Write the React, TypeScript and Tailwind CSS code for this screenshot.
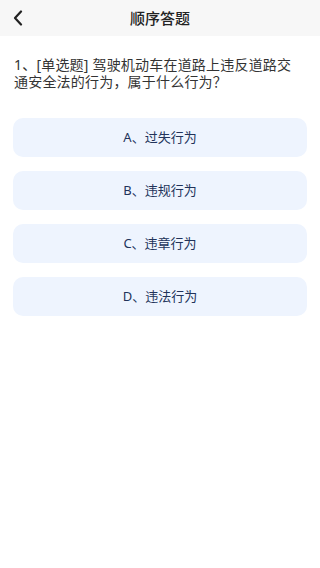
const options = ["A、过失行为", "B、违规行为", "C、违章行为", "D、违法行为"];

export default function App() {
  return (
    <div
      className="min-h-[568px] w-[320px] bg-white"
      style={{ fontFamily: '"Noto Sans", "Noto Sans CJK SC", sans-serif' }}
    >
      <header className="relative flex h-[36px] items-center justify-center bg-[#f7f7f7]">
        <button className="absolute left-[11px] top-[8px] flex h-[20px] w-[14px] items-center justify-center">
          <svg width="10" height="16" viewBox="0 0 10 16" fill="none">
            <path d="M8 1.5L2 8l6 6.5" stroke="#222" strokeWidth="2.2" strokeLinecap="round" strokeLinejoin="round" />
          </svg>
        </button>
        <h1 className="text-[15px] font-medium text-[#222]">顺序答题</h1>
      </header>

      <p className="pl-[14px] pr-[24px] pt-[20px] text-[14px] leading-[17px] tracking-[0.2px] text-[#333]">
        1、[单选题] 驾驶机动车在道路上违反道路交通安全法的行为，属于什么行为？
      </p>

      <div className="flex flex-col gap-[14px] px-[13px] pt-[28px]">
        {options.map((o) => (
          <div
            key={o}
            className="flex h-[39px] items-center justify-center rounded-[10px] bg-[#eef4fe] text-[13px] text-[#22335a]"
          >
            {o}
          </div>
        ))}
      </div>
    </div>
  );
}
